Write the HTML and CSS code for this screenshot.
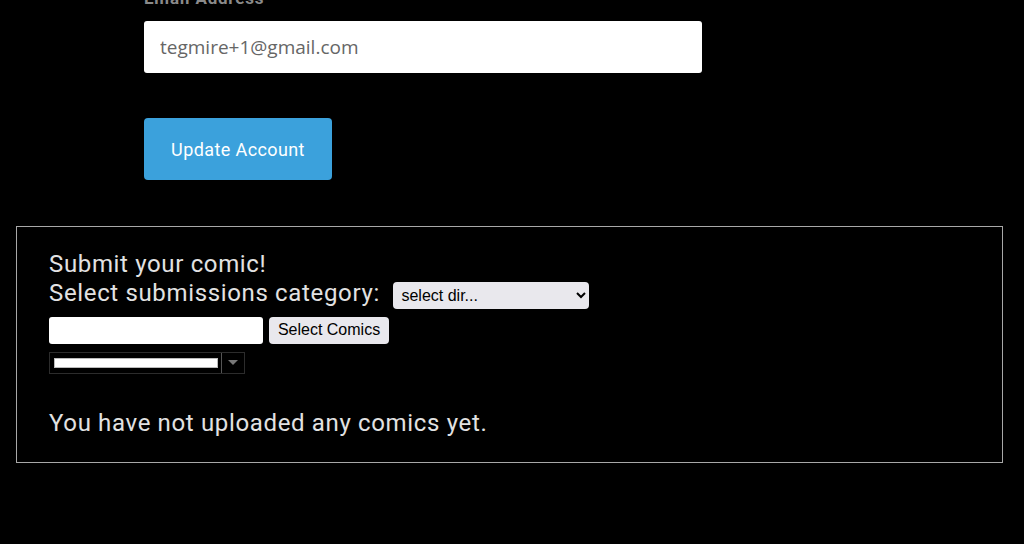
FILE: index.html
```html
<!DOCTYPE html>
<html lang="en">
  <head>
    <meta charset="UTF-8" />
    <meta name="viewport" content="width=device-width, initial-scale=1.0" />
    <title>Account</title>
    <link rel="stylesheet" href="styles.css">
  </head>
  <body>
    <form class="account">
      <label for="email" class="field-label">Email Address</label>
      <input type="text" id="email" class="email-input" value="tegmire+1@gmail.com" />
      <button type="button" class="update-btn">Update Account</button>
    </form>

    <div class="submit-box">
      <div class="line">Submit your comic!</div>
      <div class="line">
        Select submissions category:
        <select class="dir-select">
          <option>select dir...</option>
        </select>
      </div>
      <div class="file-row">
        <input type="text" class="file-name" />
        <button type="button" class="pick-btn">Select Comics</button>
      </div>
      <div class="progress">
        <div class="progress-track"><div class="progress-bar"></div></div>
        <div class="progress-toggle"><span class="arrow"></span></div>
      </div>
      <p class="empty">You have not uploaded any comics yet.</p>
    </div>
  </body>
</html>
```

FILE: styles.css
```css
body {
  margin: 0;
  background: #000;
  font-family: Roboto, "Liberation Sans", sans-serif;
  color: #e2e2e2;
}

.account {
  display: flex;
  flex-direction: column;
  align-items: flex-start;
  padding-left: 144px;
  margin-top: -12px;
}

.field-label {
  color: #8a8a8a;
  font-weight: bold;
  font-size: 17px;
  letter-spacing: 0.8px;
  line-height: 20px;
  margin-bottom: 13px;
}

.email-input {
  box-sizing: border-box;
  width: 558px;
  height: 52px;
  border: none;
  border-radius: 3px;
  padding: 0 16px;
  font-family: "Open Sans", sans-serif;
  font-size: 19px;
  color: #666;
  background: #fff;
}

.update-btn {
  margin-top: 45px;
  width: 188px;
  height: 62px;
  border: none;
  border-radius: 4px;
  background: #3ba1dc;
  color: #fff;
  font-family: Roboto, sans-serif;
  font-size: 18px;
  letter-spacing: 0.4px;
}

.submit-box {
  margin: 46px 21px 0 16px;
  border: 1px solid #a8a8a8;
  padding: 23px 32px 24px;
  font-size: 24px;
  line-height: 29px;
  letter-spacing: 0.65px;
}

.dir-select {
  width: 196px;
  height: 27px;
  margin: 1px 0 0 7px;
  font-size: 16px;
  letter-spacing: 0;
  vertical-align: middle;
  border-radius: 4px;
  border: none;
  background: #e9e8ed;
  color: #000;
  padding: 0 4px;
}

.file-row {
  display: flex;
  gap: 6px;
  margin-top: 8px;
}

.file-name {
  box-sizing: border-box;
  width: 214px;
  height: 27px;
  border: none;
  border-radius: 3px;
  background: #fff;
}

.pick-btn {
  height: 27px;
  width: 120px;
  border: none;
  border-radius: 4px;
  background: #e9e8ed;
  color: #000;
  font-size: 16px;
  letter-spacing: 0;
  padding: 0;
}

.progress {
  display: flex;
  box-sizing: border-box;
  width: 196px;
  height: 22px;
  margin-top: 8px;
  border: 1px solid #2c2c2c;
}

.progress-track {
  flex: 1;
  display: flex;
  align-items: center;
  padding-left: 4px;
  padding-right: 3px;
}

.progress-bar {
  height: 10px;
  width: 100%;
  background: #fff;
  border: 1px solid #bbb;
  box-sizing: border-box;
}

.progress-toggle {
  width: 22px;
  border-left: 1px solid #555;
  display: flex;
  align-items: center;
  justify-content: center;
}

.arrow {
  width: 0;
  height: 0;
  border-left: 5px solid transparent;
  border-right: 5px solid transparent;
  border-top: 5px solid #777;
}

.empty {
  margin: 35px 0 0;
}
```
